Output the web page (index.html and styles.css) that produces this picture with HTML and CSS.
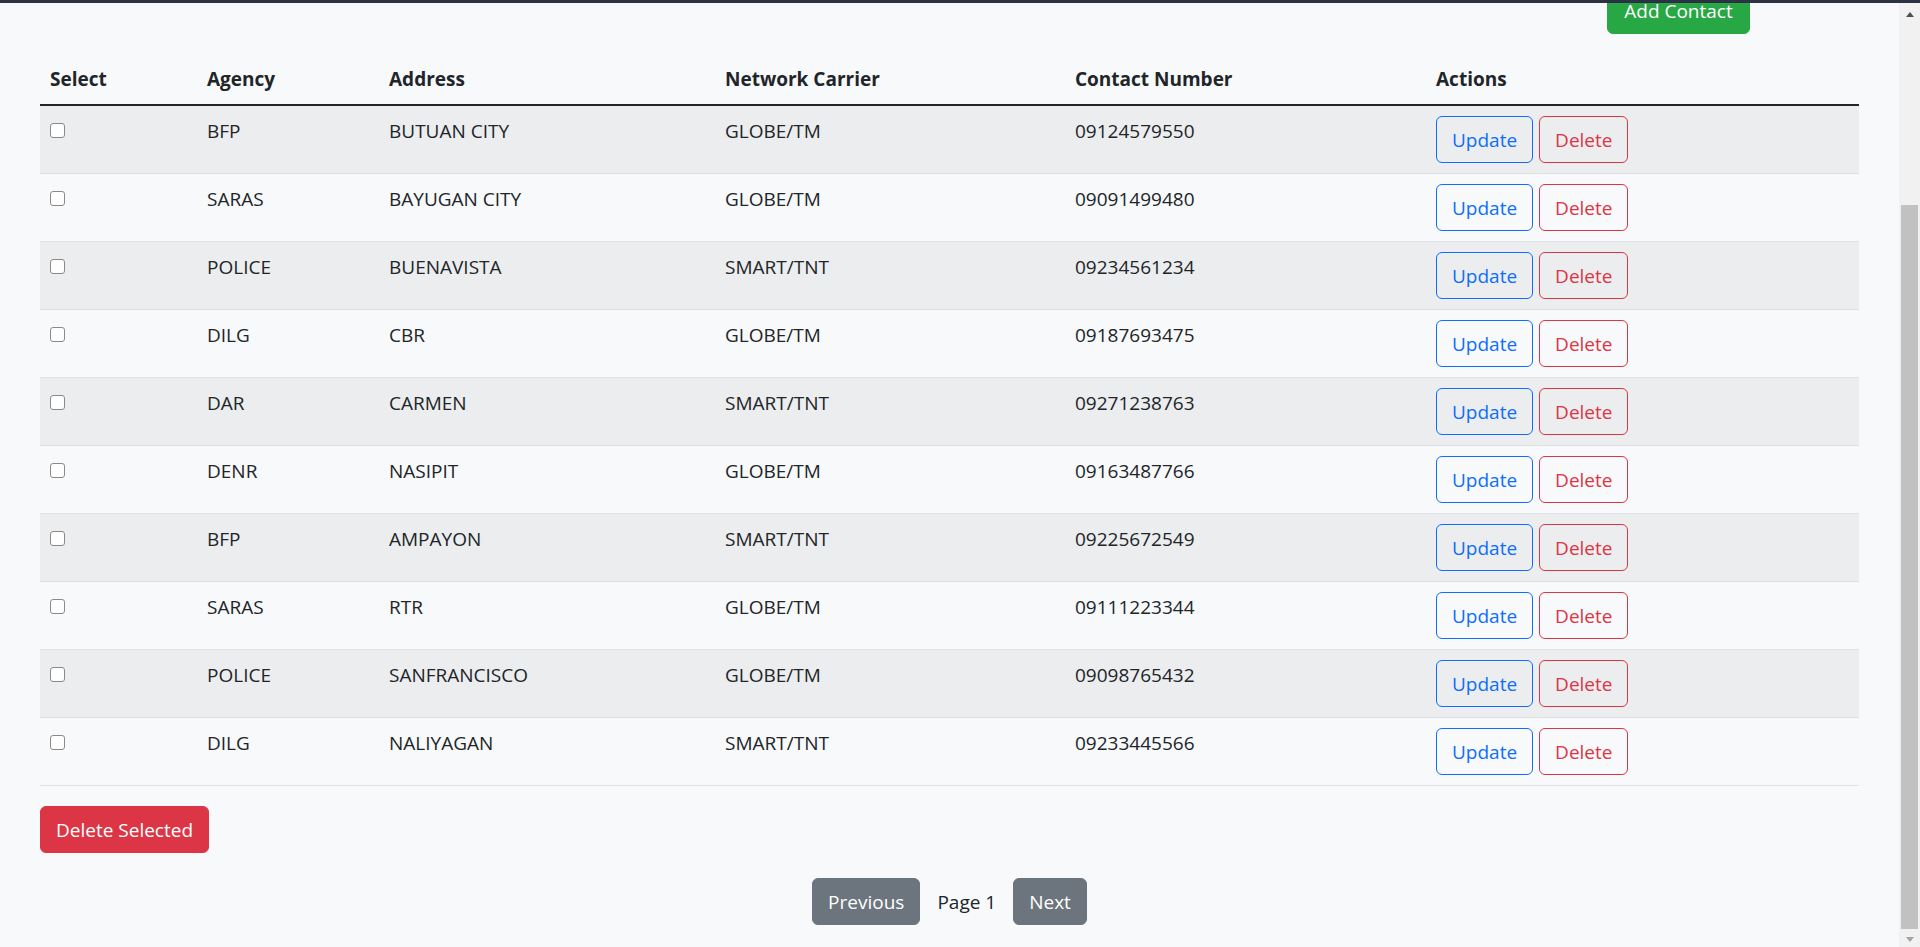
FILE: index.html
```html
<!DOCTYPE html>
<html lang="en">
<head>
<meta charset="utf-8">
<title>Contacts</title>
<link rel="stylesheet" href="styles.css">
</head>
<body>
<div class="topbar"></div>
<div class="window">
  <div class="viewport">
    <div class="page">
      <div class="toolbar">
        <button class="btn btn-success btn-add">Add Contact</button>
      </div>
      <table class="contacts">
        <colgroup>
          <col class="c-select"><col class="c-agency"><col class="c-address"><col class="c-carrier"><col class="c-number"><col class="c-actions">
        </colgroup>
        <thead>
          <tr><th>Select</th><th>Agency</th><th>Address</th><th>Network Carrier</th><th>Contact Number</th><th>Actions</th></tr>
        </thead>
        <tbody>
          <tr><td><input type="checkbox" class="chk"></td><td>BFP</td><td>BUTUAN CITY</td><td>GLOBE/TM</td><td>09124579550</td><td><div class="actions"><button class="btn btn-outline-primary">Update</button><button class="btn btn-outline-danger">Delete</button></div></td></tr>
          <tr><td><input type="checkbox" class="chk"></td><td>SARAS</td><td>BAYUGAN CITY</td><td>GLOBE/TM</td><td>09091499480</td><td><div class="actions"><button class="btn btn-outline-primary">Update</button><button class="btn btn-outline-danger">Delete</button></div></td></tr>
          <tr><td><input type="checkbox" class="chk"></td><td>POLICE</td><td>BUENAVISTA</td><td>SMART/TNT</td><td>09234561234</td><td><div class="actions"><button class="btn btn-outline-primary">Update</button><button class="btn btn-outline-danger">Delete</button></div></td></tr>
          <tr><td><input type="checkbox" class="chk"></td><td>DILG</td><td>CBR</td><td>GLOBE/TM</td><td>09187693475</td><td><div class="actions"><button class="btn btn-outline-primary">Update</button><button class="btn btn-outline-danger">Delete</button></div></td></tr>
          <tr><td><input type="checkbox" class="chk"></td><td>DAR</td><td>CARMEN</td><td>SMART/TNT</td><td>09271238763</td><td><div class="actions"><button class="btn btn-outline-primary">Update</button><button class="btn btn-outline-danger">Delete</button></div></td></tr>
          <tr><td><input type="checkbox" class="chk"></td><td>DENR</td><td>NASIPIT</td><td>GLOBE/TM</td><td>09163487766</td><td><div class="actions"><button class="btn btn-outline-primary">Update</button><button class="btn btn-outline-danger">Delete</button></div></td></tr>
          <tr><td><input type="checkbox" class="chk"></td><td>BFP</td><td>AMPAYON</td><td>SMART/TNT</td><td>09225672549</td><td><div class="actions"><button class="btn btn-outline-primary">Update</button><button class="btn btn-outline-danger">Delete</button></div></td></tr>
          <tr><td><input type="checkbox" class="chk"></td><td>SARAS</td><td>RTR</td><td>GLOBE/TM</td><td>09111223344</td><td><div class="actions"><button class="btn btn-outline-primary">Update</button><button class="btn btn-outline-danger">Delete</button></div></td></tr>
          <tr><td><input type="checkbox" class="chk"></td><td>POLICE</td><td>SANFRANCISCO</td><td>GLOBE/TM</td><td>09098765432</td><td><div class="actions"><button class="btn btn-outline-primary">Update</button><button class="btn btn-outline-danger">Delete</button></div></td></tr>
          <tr><td><input type="checkbox" class="chk"></td><td>DILG</td><td>NALIYAGAN</td><td>SMART/TNT</td><td>09233445566</td><td><div class="actions"><button class="btn btn-outline-primary">Update</button><button class="btn btn-outline-danger">Delete</button></div></td></tr>
        </tbody>
      </table>
      <div class="bulk">
        <button class="btn btn-danger">Delete Selected</button>
      </div>
      <div class="pager">
        <button class="btn btn-secondary">Previous</button>
        <span class="page-label">Page 1</span>
        <button class="btn btn-secondary">Next</button>
      </div>
    </div>
  </div>
  <div class="scrollbar">
    <div class="sb-btn sb-up"><span class="tri tri-up"></span></div>
    <div class="sb-track"><div class="sb-thumb"></div></div>
    <div class="sb-btn sb-down"><span class="tri tri-down"></span></div>
  </div>
</div>
</body>
</html>
```
FILE: styles.css
```css
* { box-sizing: border-box; }
html, body { margin: 0; padding: 0; height: 100%; }
body {
  background: #f8f9fa;
  color: #212529;
  font-family: "Open Sans", "Noto Sans", sans-serif;
  font-size: 19px;
  line-height: 30px;
  display: flex;
  flex-direction: column;
  overflow: hidden;
}
.topbar { height: 3px; background: #2c3143; flex: none; }
.window { flex: 1; display: flex; min-height: 0; }
.viewport { flex: 1; overflow: hidden; }
.page { margin-top: -16px; }

.toolbar { display: flex; justify-content: flex-end; padding-right: 149px; margin-bottom: 20px; }

.btn {
  font-family: inherit;
  font-size: 19px;
  line-height: 30px;
  padding: 7.5px 15px;
  border: 1px solid transparent;
  border-radius: 6px;
  background: transparent;
  cursor: pointer;
  white-space: nowrap;
}
.btn-success { background: #28a745; border-color: #28a745; color: #fff; }
.btn-add { width: 143px; padding-left: 0; padding-right: 0; }
.btn-danger { background: #dc3545; border-color: #dc3545; color: #fff; }
.btn-secondary { background: #6c757d; border-color: #6c757d; color: #fff; }
.btn-outline-primary { color: #0d6efd; border-color: #0d6efd; }
.btn-outline-danger { color: #dc3545; border-color: #dc3545; }

.contacts {
  margin: 0 40px 20px;
  width: 1819px;
  table-layout: fixed;
  border-collapse: collapse;
}
.c-select { width: 157px; }
.c-agency { width: 182px; }
.c-address { width: 336px; }
.c-carrier { width: 350px; }
.c-number { width: 361px; }
.c-actions { width: 433px; }

.contacts th {
  text-align: left;
  font-weight: 700;
  padding: 10px;
  vertical-align: bottom;
  border-bottom: 2px solid #212529;
}
.contacts td {
  padding: 10px;
  vertical-align: top;
  border-bottom: 1px solid #dee2e6;
}
.contacts tbody tr:nth-child(odd) td { background: #ecedee; }

.chk {
  -webkit-appearance: none;
  appearance: none;
  display: block;
  width: 15px;
  height: 15px;
  margin: 7px 0 0;
  border: 1px solid #8a8a8a;
  border-radius: 3px;
  background: #fff;
}
.actions { display: flex; gap: 6px; }

.bulk { padding: 0 40px; }
.pager {
  display: flex;
  justify-content: center;
  align-items: center;
  gap: 17px;
  margin-top: 25px;
}
.page-label { color: #212529; }

.scrollbar {
  width: 21px;
  flex: none;
  background: #f1f1f1;
  display: flex;
  flex-direction: column;
}
.sb-btn { flex: none; display: flex; align-items: center; justify-content: center; }
.sb-up { height: 21px; padding-top: 2px; }
.sb-down { height: 18px; padding-top: 3px; }
.sb-track { flex: 1; display: flex; flex-direction: column; padding-top: 181px; }
.sb-thumb { flex: 1; margin: 0 2px; background: #c1c1c1; }
.tri { width: 0; height: 0; border-left: 4.5px solid transparent; border-right: 4.5px solid transparent; }
.tri-up { border-bottom: 5px solid #505050; }
.tri-down { border-top: 5px solid #a3a3a3; }
```
